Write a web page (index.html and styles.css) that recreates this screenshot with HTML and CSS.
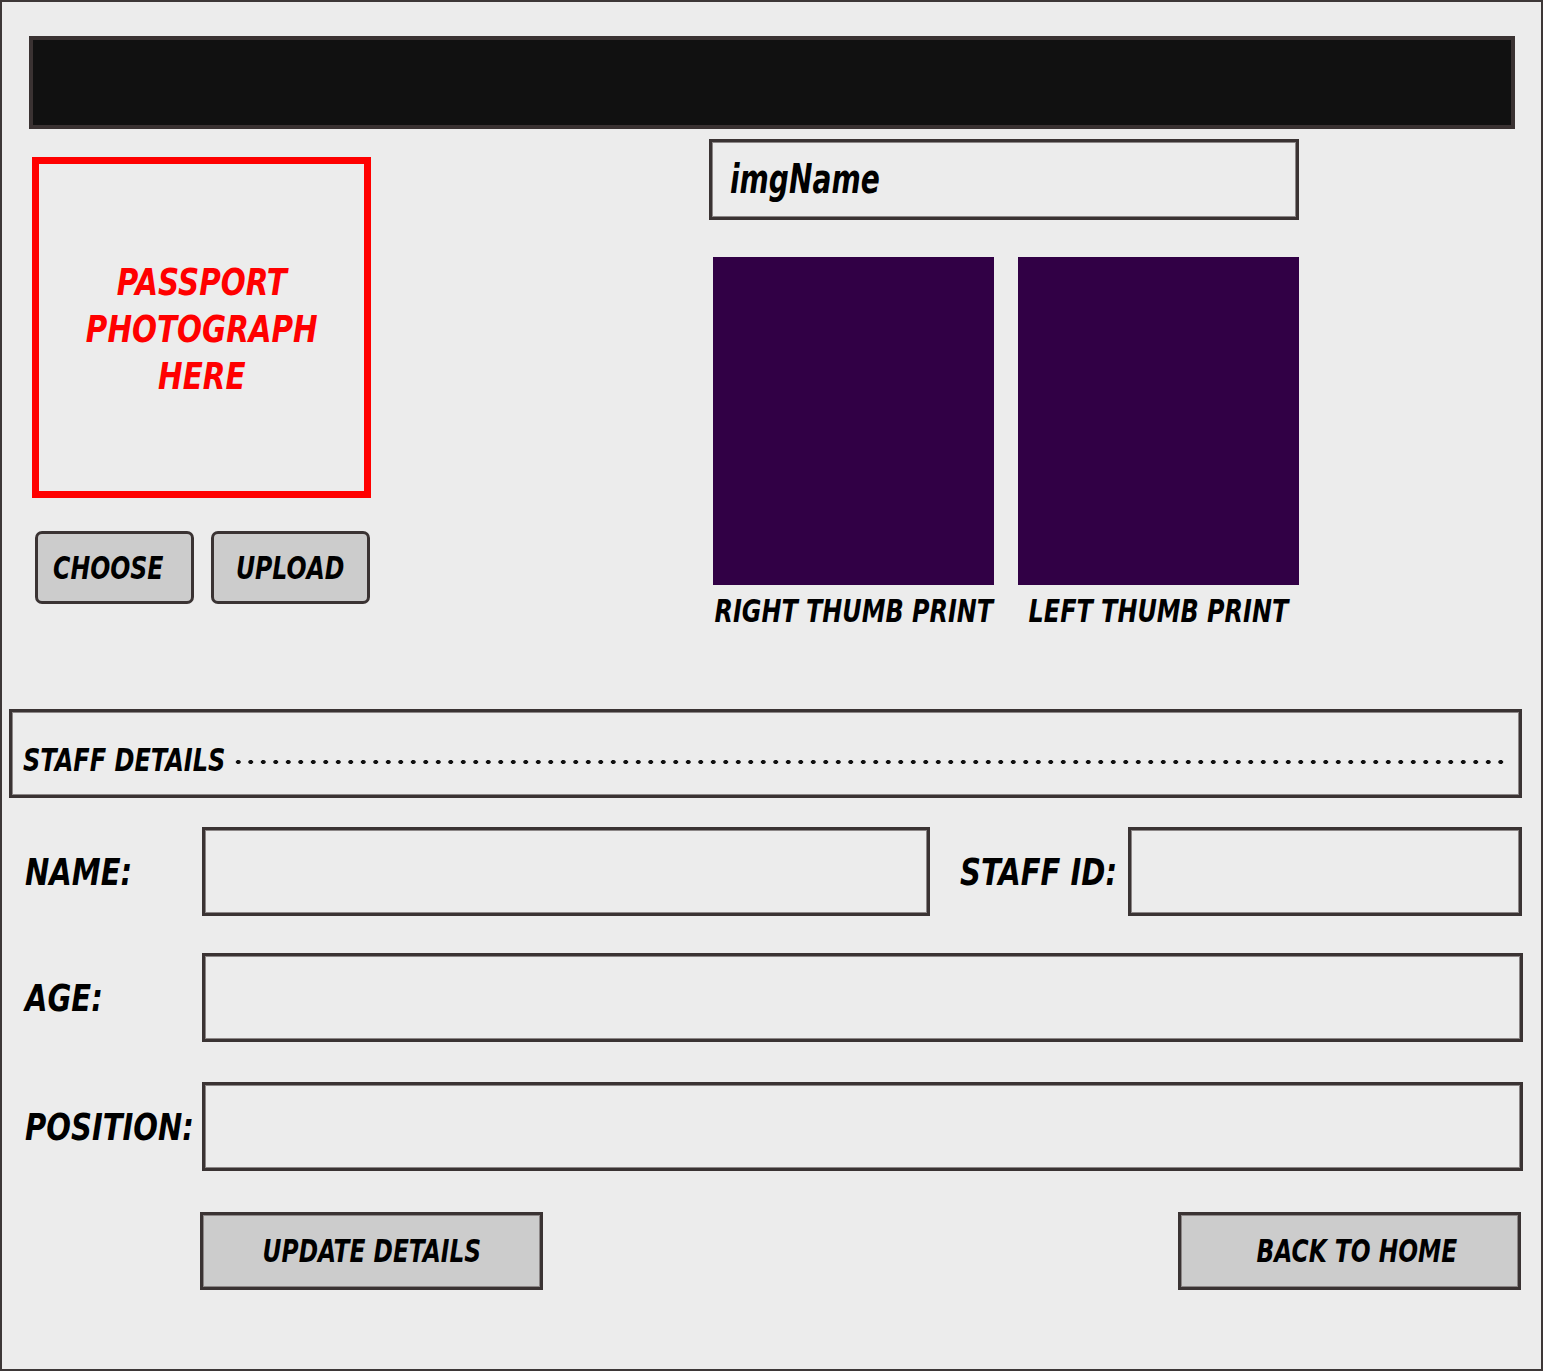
FILE: index.html
```html
<!DOCTYPE html>
<html>
<head>
<meta charset="utf-8">
<link rel="stylesheet" href="styles.css">
</head>
<body>
<div class="frame">
  <div class="header"></div>
  <div class="top">
    <div class="left">
      <div class="passport"><span class="t">PASSPORT<br>PHOTOGRAPH<br>HERE</span></div>
      <div class="btns">
        <div class="btn btn-choose"><span class="t">CHOOSE</span></div>
        <div class="btn"><span class="t">UPLOAD</span></div>
      </div>
    </div>
    <div class="right">
      <div class="imgname"><span class="t">imgName</span></div>
      <div class="thumbs">
        <div class="thumb">
          <div class="thumb-img"></div>
          <div class="thumb-label"><span class="t">RIGHT THUMB PRINT</span></div>
        </div>
        <div class="thumb">
          <div class="thumb-img"></div>
          <div class="thumb-label"><span class="t">LEFT THUMB PRINT</span></div>
        </div>
      </div>
    </div>
  </div>
  <div class="staff">
    <span class="t staff-title">STAFF DETAILS</span>
    <span class="dots"></span>
  </div>
  <div class="row row-name">
    <div class="label"><span class="t">NAME:</span></div>
    <div class="input input-name"></div>
    <div class="label label-id"><span class="t">STAFF ID:</span></div>
    <div class="input input-id"></div>
  </div>
  <div class="row row-age">
    <div class="label"><span class="t">AGE:</span></div>
    <div class="input input-wide"></div>
  </div>
  <div class="row row-pos">
    <div class="label"><span class="t">POSITION:</span></div>
    <div class="input input-wide"></div>
  </div>
  <div class="actions">
    <div class="action"><span class="t">UPDATE DETAILS</span></div>
    <div class="action action-home"><span class="t">BACK TO HOME</span></div>
  </div>
</div>
</body>
</html>
```

FILE: styles.css
```css
* { box-sizing: border-box; }
html, body { margin: 0; padding: 0; background: #ececec; }
body {
  font-family: "DejaVu Sans Condensed", "DejaVu Sans", sans-serif;
  font-style: italic;
  font-weight: bold;
  color: #000;
}
.t {
  display: inline-block;
  white-space: nowrap;
  transform: scaleX(var(--sx, 0.84));
  transform-origin: center;
}
.frame {
  width: 1543px;
  height: 1371px;
  border: 2px solid #3d3737;
  background: #ececec;
  overflow: hidden;
}
.header {
  margin: 34px 0 0 27px;
  width: 1486px;
  height: 93px;
  border: 4px solid #3a3232;
  background: #111111;
}
.top {
  display: flex;
  align-items: flex-start;
  height: 570px;
  margin-top: 10px;
}
.left {
  margin-left: 30px;
  margin-top: 18px;
  width: 339px;
}
.passport {
  width: 339px;
  height: 341px;
  border: 7px solid #ff0000;
  display: flex;
  align-items: center;
  justify-content: center;
  text-align: center;
  padding-top: 4px;
  color: #ff0000;
  font-size: 38px;
  line-height: 47px;
  --sx: 0.86;
}
.btns {
  display: flex;
  gap: 17px;
  margin-top: 33px;
  padding-left: 3px;
}
.btn {
  width: 159px;
  height: 73px;
  border: 3px solid #3a3333;
  border-radius: 7px;
  background: #cccccc;
  display: flex;
  align-items: center;
  justify-content: center;
  font-size: 32px;
  line-height: 1;
  --sx: 0.82;
}
.btn-choose { padding-right: 12px; }
.right {
  margin-left: 338px;
}
.imgname {
  width: 590px;
  height: 81px;
  border: 3px solid #3a3333;
  box-shadow: inset 0 0 0 1px #8c8787;
  display: flex;
  align-items: center;
  padding-left: 18px;
  padding-bottom: 2px;
  font-size: 40px;
  line-height: 1;
  --sx: 0.78;
}
.imgname .t { transform-origin: left center; }
.thumbs {
  display: flex;
  gap: 24px;
  margin-top: 37px;
  padding-left: 4px;
}
.thumb { width: 281px; }
.thumb-img {
  height: 328px;
  background: #310045;
}
.thumb-label {
  margin-top: 10px;
  display: flex;
  justify-content: center;
  font-size: 32px;
  line-height: 1;
  --sx: 0.83;
}
.staff {
  margin: 0 0 0 7px;
  width: 1513px;
  height: 89px;
  border: 3px solid #3a3333;
  box-shadow: inset 0 0 0 1px #8c8787;
  display: flex;
  align-items: flex-start;
  padding: 32px 12px 0 11px;
}
.staff-title {
  font-size: 32px;
  line-height: 1;
  --sx: 0.835;
  transform-origin: left center;
  margin-right: -40px;
}
.dots {
  flex: 1;
  height: 32px;
  margin-left: 7px;
  background-image: radial-gradient(circle, #111 2px, transparent 2.5px);
  background-size: 12.5px 8px;
  background-repeat: repeat-x;
  background-position: 0 14px;
}
.row {
  display: flex;
  align-items: center;
  padding-left: 23px;
  height: 89px;
}
.row-name { margin-top: 29px; }
.row-age { margin-top: 37px; }
.row-pos { margin-top: 40px; }
.label {
  width: 177px;
  flex: none;
  font-size: 38px;
  line-height: 1;
  --sx: 0.85;
}
.label .t { transform-origin: left center; }
.input {
  flex: none;
  height: 89px;
  border: 3px solid #3a3333;
  box-shadow: inset 0 0 0 1px #8c8787;
}
.input-name { width: 728px; }
.label.label-id { width: 168px; margin-left: 30px; }
.input-id { width: 394px; }
.input-wide { width: 1321px; }
.actions {
  display: flex;
  justify-content: space-between;
  margin-top: 41px;
  padding-left: 198px;
  width: 1519px;
}
.action {
  width: 343px;
  height: 78px;
  border: 3px solid #3a3333;
  box-shadow: inset 0 0 0 1px #8c8787;
  background: #cccccc;
  display: flex;
  align-items: center;
  justify-content: center;
  font-size: 32px;
  line-height: 1;
  --sx: 0.81;
}
.action-home { padding-left: 14px; }
```
